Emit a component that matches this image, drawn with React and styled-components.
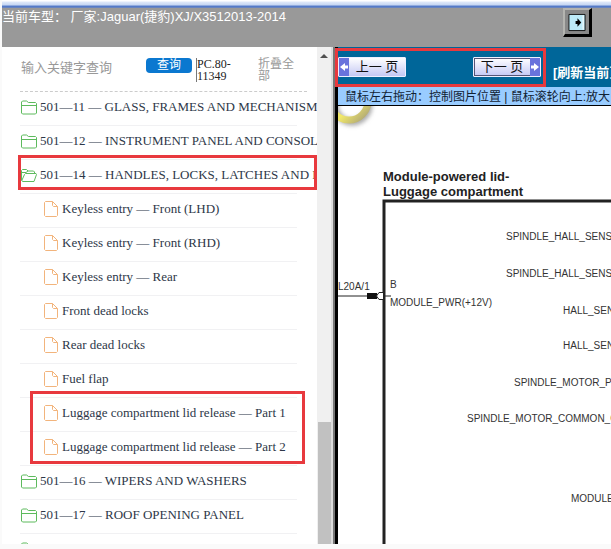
import styled, { createGlobalStyle, css } from "styled-components";

const GlobalStyle = createGlobalStyle`
  * {
    box-sizing: border-box;
  }
  body {
    margin: 0;
    background: #fafafa;
    font-family: "Liberation Sans", "Noto Sans CJK SC", sans-serif;
    font-size: 12px;
  }
  button, input {
    font-family: inherit;
    margin: 0;
  }
`;

const marked = css`
  position: relative;

  &::after {
    content: "";
    position: absolute;
    inset: ${({ $inset }) => $inset};
    border: 3px solid #e8393e;
    pointer-events: none;
    z-index: 2;
  }
`;

const Page = styled.div`
  display: flex;
  flex-direction: column;
  height: 100vh;
  padding: 0 0 5px 2px;
  overflow: hidden;
`;

const TopStripe = styled.div`
  flex: none;
  height: 8px;
  background: linear-gradient(#fff 0, #fff 1px, #dfe9fa 2px, #c5d6f2 5px, #5c80cc 6px, #4c74c4 7px, #8494b8 8px);
`;

const Header = styled.header`
  flex: none;
  display: flex;
  justify-content: space-between;
  align-items: flex-start;
  height: 39px;
  padding-right: 19px;
  background: #999;
  color: #fff;
  font-size: 13px;
  line-height: 17px;
`;

const VehicleName = styled.div`
  white-space: pre;
`;

const PanelButton = styled.button`
  display: flex;
  width: 29px;
  height: 29px;
  padding: 3px;
  border: solid;
  border-width: 2px 3px 3px 2px;
  border-color: #b4b4b0 #000 #000 #b4b4b0;
  background: #888;
`;

const Body = styled.div`
  flex: 1;
  display: flex;
  min-height: 0;
`;

const Sidebar = styled.aside`
  flex: none;
  display: flex;
  width: 329px;
  background: #fff;
`;

const SidebarContent = styled.div`
  flex: 1;
  min-width: 0;
  padding-left: 18px;
  overflow: hidden;
`;

const SearchBar = styled.form`
  display: flex;
  align-items: flex-start;
  height: 45px;
  margin-right: 10px;
  padding-top: 11px;
  border-bottom: 1px dashed #ccc;
`;

const SearchInput = styled.input`
  width: 126px;
  height: 18px;
  padding: 0 1px;
  border: 0;
  outline: 0;
  font-size: 13px;

  &::placeholder {
    color: #999;
  }
`;

const SearchButton = styled.button`
  width: 46px;
  height: 15px;
  padding: 0;
  border: 0;
  border-radius: 4px;
  background: #0b78d0;
  color: #fff;
  font-size: 12px;
  line-height: 15px;
`;

const PartCode = styled.div`
  width: 38px;
  margin-left: 4px;
  border-left: 1px solid #777;
  color: #222;
  font-family: "Liberation Serif", serif;
  line-height: 12px;
`;

const CollapseButton = styled.button`
  width: 36px;
  margin-left: 24px;
  padding: 0;
  border: 0;
  background: none;
  color: #999;
  font-size: 12px;
  line-height: 12px;
  text-align: left;
`;

const Tree = styled.ul`
  margin: 0 20px 0 0;
  padding: 0;
  list-style: none;
  color: #2d3748;
  font-family: "Liberation Serif", serif;
  font-size: 13px;
`;

const TreeItem = styled.li`
  display: flex;
  align-items: center;
  gap: ${({ $file }) => ($file ? 4 : 3)}px;
  height: 34px;
  padding-bottom: 3px;
  padding-left: ${({ $file }) => ($file ? 24 : 1)}px;
  border-bottom: 1px solid #f1f1f3;
  white-space: nowrap;

  svg {
    flex: none;
  }

  ${({ $inset }) => $inset && marked}
`;

const MarkedFiles = styled.ul`
  margin: 0;
  padding: 0;
  list-style: none;
  ${marked}
`;

const ScrollTrack = styled.div`
  flex: none;
  display: flex;
  flex-direction: column;
  justify-content: space-between;
  align-items: center;
  width: 14px;
  padding-top: 7px;
  background: #f0f0f0;
`;

const ScrollThumb = styled.div`
  width: 13px;
  height: 25%;
  background: #c1c1c1;
`;

const Divider = styled.div`
  flex: none;
  width: 7px;
  border: solid;
  border-width: 0 3px 0 2px;
  border-color: #000 #000 #000 #ddd;
  background: #777;
`;

const Viewer = styled.main`
  flex: 1;
  display: flex;
  flex-direction: column;
  min-width: 0;
`;

const ViewerBar = styled.div`
  flex: none;
  display: flex;
  align-items: center;
  gap: 10px;
  height: 40px;
  background: #069;
  white-space: nowrap;
`;

const Pager = styled.div`
  flex: none;
  display: flex;
  justify-content: space-between;
  width: 205px;
  padding: 0 2px 0 0;
  ${marked}
`;

const PageButton = styled.button`
  display: flex;
  flex-direction: ${({ $next }) => ($next ? "row-reverse" : "row")};
  align-items: stretch;
  width: 68px;
  height: 20px;
  padding: 0;
  border: 1px solid #eef;
  border-radius: 1px;
  background: linear-gradient(#fff, #c4c8f4);
  color: #111;
  font-size: 13px;
  line-height: 17px;
  box-shadow: ${({ $next }) => ($next ? "inset 0 0 0 1px #557" : "none")};

  span {
    flex: 1;
    text-align: center;
  }
`;

const ArrowCell = styled.svg`
  flex: none;
  width: 10px;
  height: 18px;
  background: #6973dc;
`;

const RefreshLink = styled.a`
  color: #fff;
  font-size: 13px;
  font-weight: bold;
  text-decoration: none;
  padding-top: 8px;
`;

const Hint = styled.div`
  flex: none;
  height: 19px;
  padding-left: 7px;
  border-bottom: 1px solid #000;
  background: #9cf;
  color: #123;
  line-height: 20px;
  white-space: nowrap;
  overflow: hidden;
`;

const Diagram = styled.svg`
  flex: 1;
  display: block;
  width: 100%;
  min-height: 0;
  background: #fff;
  font-family: "Liberation Sans", sans-serif;
  font-size: 10px;
  fill: #333;
`;

const FolderIcon = ({ open }) => (
  <svg width="16" height="15" viewBox="0 0 16 15" fill="none" stroke="#5dba5d" strokeLinejoin="round">
    {open ? (
      <path d="M1.5 13.5 .5 12V2.5L1.5 1.5H5.5L7 3H12.5L13.5 4V5.5M.8 12.5 3.5 6.5 4.5 5.5H15L15.5 6.5 13 13.5H1.5M.5 4.5H5L7 3" />
    ) : (
      <path d="M.5 13V2L1.5 1H5.5L7.5 2.5H14.5L15.5 3.5V13L14.5 14H1.5ZM.5 5.5H15.5" />
    )}
  </svg>
);

const FileIcon = () => (
  <svg width="14" height="16" viewBox="0 0 14 16" fill="none" stroke="#f2b47c" strokeLinejoin="round">
    <path d="M.5 1.5 1.5.5H8.5L13.5 5.5V14.5L12.5 15.5H1.5L.5 14.5ZM8.5.5V4.5L9.5 5.5H13.5" />
  </svg>
);

const Arrow = ({ next }) => (
  <ArrowCell viewBox="0 0 10 18" fill="#fff">
    <path d={next ? "M1 7.5H4V5L9 9 4 13V10.5H1Z" : "M9 7.5H6V5L1 9 6 13V10.5H9Z"} />
  </ArrowCell>
);

const files = [
  "Keyless entry — Front (LHD)",
  "Keyless entry — Front (RHD)",
  "Keyless entry — Rear",
  "Front dead locks",
  "Rear dead locks",
  "Fuel flap",
];

const markedFiles = [
  "Luggage compartment lid release — Part 1",
  "Luggage compartment lid release — Part 2",
];

const pins = [
  [168, 134, "SPINDLE_HALL_SENSOR"],
  [168, 171, "SPINDLE_HALL_SENSOR"],
  [225, 208, "HALL_SENSOR"],
  [225, 243, "HALL_SENSOR"],
  [176, 280, "SPINDLE_MOTOR_PWR"],
  [129, 316, "SPINDLE_MOTOR_COMMON_GND"],
  [233, 396, "MODULE_GND"],
];

const Folder = ({ children, open, inset }) => (
  <TreeItem $inset={inset}>
    <FolderIcon open={open} />
    {children}
  </TreeItem>
);

const File = ({ children }) => (
  <TreeItem $file>
    <FileIcon />
    {children}
  </TreeItem>
);

const WiringDiagram = () => (
  <Diagram role="img" aria-label="Module-powered lid wiring diagram">
    <defs>
      <linearGradient id="ring" x1="0" y1="0" x2="1" y2="1">
        <stop offset="0" stopColor="#e4d850" />
        <stop offset="0.6" stopColor="#f1e868" />
        <stop offset="1" stopColor="#a8a078" />
      </linearGradient>
      <filter id="shade" x="-50%" y="-50%" width="200%" height="200%">
        <feGaussianBlur stdDeviation="2" />
      </filter>
    </defs>
    <circle cx="14" cy="-1" r="17" fill="none" stroke="#aaa" strokeWidth="7" filter="url(#shade)" />
    <circle cx="11" cy="-5" r="19" fill="none" stroke="url(#ring)" strokeWidth="7" />
    <g fontSize="13" fontWeight="bold" fill="#222">
      <text x="45" y="75">Module-powered lid-</text>
      <text x="45" y="90">Luggage compartment</text>
    </g>
    <path d="M600 95H46V1000" fill="none" stroke="#222" strokeWidth="3" />
    <text x="0" y="184">L20A/1</text>
    <path d="M0 190H30M45 190H53" stroke="#222" />
    <path d="M29 187H39V193H29Z" fill="#111" />
    <path d="M45 186.5H41L38.5 190L41 193.5H45" fill="#fff" stroke="#222" />
    <text x="52" y="182">B</text>
    <text x="52" y="200">MODULE_PWR(+12V)</text>
    {pins.map(([x, y, name]) => (
      <text key={y} x={x} y={y}>
        {name}
      </text>
    ))}
  </Diagram>
);

export default function App() {
  return (
    <Page>
      <GlobalStyle />
      <TopStripe />
      <Header>
        <VehicleName>当前车型： 厂家:Jaguar(捷豹)XJ/X3512013-2014</VehicleName>
        <PanelButton type="button" aria-label="Toggle panel">
          <svg width="19" height="19" viewBox="0 0 19 19">
            <path d="M1 1H18V18H1Z" fill="#bdeaf8" stroke="#111" />
            <path d="M16 2V17" stroke="#fff" />
            <path d="M8 8H10V5L14 9.5 10 14V11H8Z" fill="#000" />
          </svg>
        </PanelButton>
      </Header>
      <Body>
        <Sidebar>
          <SidebarContent>
            <SearchBar onSubmit={(e) => e.preventDefault()}>
              <SearchInput aria-label="输入关键字查询" placeholder="输入关键字查询" />
              <SearchButton>查询</SearchButton>
              <PartCode>PC.80-11349</PartCode>
              <CollapseButton type="button">折叠全部</CollapseButton>
            </SearchBar>
            <Tree>
              <Folder>501—11 — GLASS, FRAMES AND MECHANISMS</Folder>
              <Folder>501—12 — INSTRUMENT PANEL AND CONSOLE</Folder>
              <Folder open inset="-5px -20px 3px -2px">
                501—14 — HANDLES, LOCKS, LATCHES AND ENTRY SYSTEMS
              </Folder>
              {files.map((name) => (
                <File key={name}>{name}</File>
              ))}
              <li>
                <MarkedFiles $inset="-7px -8px 2px 10px">
                  {markedFiles.map((name) => (
                    <File key={name}>{name}</File>
                  ))}
                </MarkedFiles>
              </li>
              <Folder>501—16 — WIPERS AND WASHERS</Folder>
              <Folder>501—17 — ROOF OPENING PANEL</Folder>
              <Folder>501—18</Folder>
            </Tree>
          </SidebarContent>
          <ScrollTrack aria-hidden="true">
            <svg width="8" height="4" viewBox="0 0 8 4">
              <path d="M0 4 4 0 8 4Z" fill="#505050" />
            </svg>
            <ScrollThumb />
          </ScrollTrack>
        </Sidebar>
        <Divider />
        <Viewer>
          <ViewerBar>
            <Pager $inset="-9px -3px -10px -3px">
              <PageButton type="button">
                <Arrow />
                <span>上一 页</span>
              </PageButton>
              <PageButton type="button" $next>
                <Arrow next />
                <span>下一 页</span>
              </PageButton>
            </Pager>
            <RefreshLink href="#refresh">[刷新当前页面]</RefreshLink>
          </ViewerBar>
          <Hint>鼠标左右拖动：控制图片位置 | 鼠标滚轮向上:放大</Hint>
          <WiringDiagram />
        </Viewer>
      </Body>
    </Page>
  );
}
